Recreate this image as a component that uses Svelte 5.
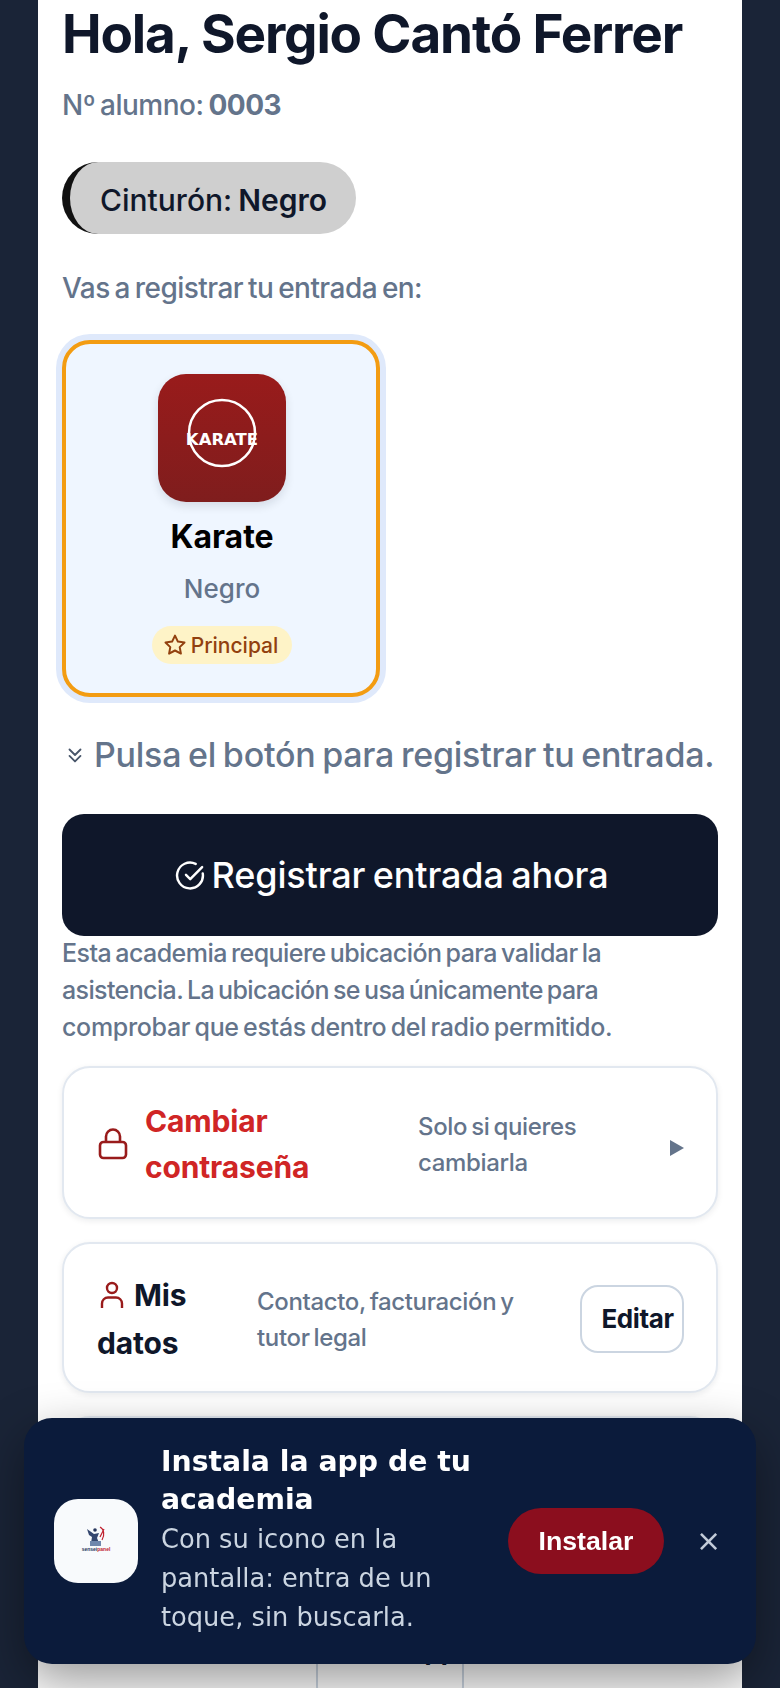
<script>
  const notes = [
    'Esta academia requiere ubicación para validar la',
    'asistencia. La ubicación se usa únicamente para',
    'comprobar que estás dentro del radio permitido.'
  ];
</script>

<div class="screen">
  <main class="sheet">
    <h1>Hola, Sergio Cantó Ferrer</h1>
    <p class="num">Nº alumno: <b>0003</b></p>
    <div class="belt"><span>Cinturón: <b>Negro</b></span></div>
    <p class="lead">Vas a registrar tu entrada en:</p>

    <div class="tile">
      <div class="logo">
        <svg viewBox="0 0 128 128" width="128" height="128" aria-hidden="true">
          <circle cx="64" cy="59" r="33" fill="none" stroke="#fff" stroke-width="2.5" />
          <text x="64" y="71" text-anchor="middle" class="logotext">KARATE</text>
        </svg>
      </div>
      <div class="sport">Karate</div>
      <div class="rank">Negro</div>
      <div class="badge">
        <svg viewBox="0 0 24 24" width="24" height="24" fill="none" stroke="#92400e" stroke-width="2" stroke-linejoin="round" aria-hidden="true">
          <path d="M12 2.600l2.900 6 6.600.9-4.800 4.600 1.200 6.500L12 17.500l-5.900 3.100 1.200-6.500L2.500 9.500l6.600-.9z" />
        </svg>
        <span>Principal</span>
      </div>
    </div>

    <div class="hint">
      <svg viewBox="0 0 24 24" width="22" height="22" fill="none" stroke="#475569" stroke-width="2" stroke-linecap="round" stroke-linejoin="round" aria-hidden="true">
        <path d="M6 6l6 6 6-6M6 13l6 6 6-6" />
      </svg>
      <span>Pulsa el botón para registrar tu entrada.</span>
    </div>

    <button class="cta">
      <svg viewBox="0 0 24 24" width="31" height="31" fill="none" stroke="#fff" stroke-width="1.900" stroke-linecap="round" stroke-linejoin="round" aria-hidden="true">
        <path d="M21.500 10.500A10 10 0 1 1 16 3" />
        <path d="M8.500 11.500l3.300 3.300L21 5.500" />
      </svg>
      <span>Registrar entrada ahora</span>
    </button>

    <p class="note">
      {#each notes as line}<span>{line}</span>{/each}
    </p>

    <section class="row pw">
      <svg class="lock" viewBox="0 0 30 34" width="30" height="34" fill="none" stroke="#991b1b" stroke-width="2.600" aria-hidden="true">
        <rect x="2" y="15" width="26" height="16" rx="3.500" />
        <path d="M8 15V9.500a7 7 0 0 1 14 0V15" />
      </svg>
      <div class="rtitle red">Cambiar<br />contraseña</div>
      <div class="rdesc">Solo si quieres<br />cambiarla</div>
      <span class="tri"></span>
    </section>

    <section class="row data">
      <div class="rtitle dark">
        <svg class="user" viewBox="0 0 24 28" width="24" height="28" fill="none" stroke="#991b1b" stroke-width="2.400" aria-hidden="true">
          <circle cx="12" cy="7" r="5" />
          <path d="M2 27v-4.500a6 6 0 0 1 6-6h8a6 6 0 0 1 6 6V27" />
        </svg>Mis<br />datos
      </div>
      <div class="rdesc">Contacto, facturación y<br />tutor legal</div>
      <button class="edit">Editar</button>
    </section>

    <section class="row third"></section>

    <button class="last">WhatsApp</button>
  </main>

  <aside class="install">
    <div class="appicon">
      <svg viewBox="0 0 30 30" width="30" height="30" aria-hidden="true">
        <circle cx="14" cy="4" r="1.800" fill="#26365c" />
        <path d="M6 3l7 5 5-1-2 5 2 5H10l1-6-3-2z" fill="#34476f" />
        <path d="M19 1c4 2 5 8 2 13M23 3l-4 8" fill="none" stroke="#c0212f" stroke-width="1.200" />
        <path d="M9 15h11v5H9z" fill="#6f87ad" />
        <text x="15" y="25" text-anchor="middle" class="tiny">sensei<tspan fill="#c0212f">panel</tspan></text>
      </svg>
    </div>
    <div class="itext">
      <div class="ititle">Instala la app de tu academia</div>
      <div class="isub">Con su icono en la pantalla: entra de un toque, sin buscarla.</div>
    </div>
    <button class="ibtn">Instalar</button>
    <button class="iclose" aria-label="Cerrar">×</button>
  </aside>
</div>

<style>
  :global(body) {
    margin: 0;
    background: #1a2437;
  }
  .screen {
    width: 780px;
    height: 1688px;
    overflow: hidden;
    background: #1a2437;
    font-family: "Inter", "Liberation Sans", sans-serif;
    color: #0f172a;
  }
  .sheet {
    width: 704px;
    margin: 0 auto;
    box-sizing: border-box;
    background: #fff;
    padding: 0 24px;
    min-height: 1800px;
    display: flex;
    flex-direction: column;
    align-items: flex-start;
  }
  h1 {
    margin: 3px 0 0;
    font-size: 53px;
    line-height: 62px;
    font-weight: 700;
    letter-spacing: -1.15px;
    white-space: nowrap;
  }
  .num {
    margin: 22px 0 0;
    font-size: 28px;
    line-height: 36px;
    color: #64748b;
    font-weight: 500;
    word-spacing: -2px;
    letter-spacing: -0.5px;
  }
  .num b { font-weight: 700; }
  .belt {
    margin-top: 39px;
    height: 72px;
    box-sizing: border-box;
    padding: 3px 29px 0 30px;
    display: flex;
    align-items: center;
    background: #cfcfcf;
    border-left: 8px solid #111;
    border-radius: 36px;
    font-size: 30px;
    font-weight: 500;
    word-spacing: -2px;
    white-space: nowrap;
  }
  .belt b { font-weight: 600; }
  .lead {
    margin: 36px 0 0;
    font-size: 28px;
    line-height: 36px;
    color: #64748b;
    font-weight: 500;
    word-spacing: -2px;
    letter-spacing: -0.55px;
  }
  .tile {
    margin-top: 34px;
    width: 318px;
    height: 357px;
    box-sizing: border-box;
    border: 4px solid #f39c12;
    border-radius: 28px;
    background: #eff6ff;
    box-shadow: 0 0 0 6px #dfe9fb;
    display: flex;
    flex-direction: column;
    align-items: center;
    padding: 30px 0 0 2px;
  }
  .logo {
    width: 128px;
    height: 128px;
    border-radius: 28px;
    background: linear-gradient(180deg, #991b1b, #7f1d1d);
    box-shadow: 0 4px 10px rgba(15, 23, 42, 0.12);
  }
  .logo svg { display: block; }
  .logotext {
    font-family: "DejaVu Sans", sans-serif;
    font-size: 16.500px;
    font-weight: 700;
    fill: #fff;
  }
  .sport {
    margin-top: 15px;
    font-size: 32px;
    line-height: 40px;
    font-weight: 700;
    color: #000;
  }
  .rank {
    margin-top: 16px;
    font-size: 26px;
    line-height: 32px;
    font-weight: 500;
    color: #64748b;
  }
  .badge {
    margin-top: 21px;
    height: 38px;
    padding: 0 14px 0 11px;
    display: flex;
    align-items: center;
    gap: 4px;
    border-radius: 19px;
    background: #fef3c7;
    font-size: 21px;
    font-weight: 500;
    color: #92400e;
  }
  .hint {
    margin-top: 36px;
    display: flex;
    align-items: center;
    gap: 8px;
    padding-left: 2px;
    font-size: 34px;
    line-height: 44px;
    font-weight: 500;
    color: #64748b;
    white-space: nowrap;
    word-spacing: -2px;
    letter-spacing: -0.25px;
  }
  .cta {
    margin-top: 37px;
    width: 656px;
    height: 122px;
    border: 0;
    border-radius: 22px;
    background: #0f172a;
    color: #fff;
    display: flex;
    align-items: center;
    justify-content: center;
    gap: 6px;
    font: inherit;
    font-size: 36px;
    font-weight: 500;
    word-spacing: -2px;
    letter-spacing: -0.15px;
  }
  .cta svg { margin-left: 3px; }
  .note {
    margin: -1px 0 0;
    font-size: 25px;
    line-height: 37px;
    font-weight: 500;
    color: #64748b;
    word-spacing: -2px;
    letter-spacing: -0.55px;
  }
  .note span { display: block; white-space: nowrap; }
  .note span:nth-child(2) { letter-spacing: -0.62px; }
  .note span:last-child { letter-spacing: -0.32px; }
  .row {
    width: 656px;
    box-sizing: border-box;
    border: 2px solid #e2e8f0;
    border-radius: 28px;
    background: #fff;
    box-shadow: 0 2px 6px rgba(15, 23, 42, 0.08);
    display: flex;
    align-items: center;
  }
  .pw {
    margin-top: 20px;
    height: 153px;
    padding: 2px 32px 0 34px;
  }
  .data {
    margin-top: 23px;
    height: 151px;
    padding: 2px 32px 0 33px;
  }
  .third {
    margin-top: 23px;
    height: 150px;
  }
  .lock { flex: none; margin-right: 17px; }
  .rtitle {
    font-size: 30px;
    line-height: 46px;
    font-weight: 700;
    white-space: nowrap;
    letter-spacing: -0.15px;
  }
  .red { color: #d02525; width: 273px; }
  .dark { color: #0f172a; width: 160px; line-height: 48px; }
  .user { vertical-align: -3px; margin: 0 10px 0 3px; }
  .rdesc {
    padding-top: 2px;
    font-size: 24px;
    line-height: 36px;
    font-weight: 500;
    color: #64748b;
    white-space: nowrap;
    word-spacing: -2px;
    letter-spacing: -0.35px;
  }
  .tri {
    margin: 8px 0 0 auto;
    width: 0;
    height: 0;
    border-left: 14px solid #64748b;
    border-top: 8px solid transparent;
    border-bottom: 8px solid transparent;
  }
  .edit {
    margin-left: auto;
    width: 104px;
    height: 68px;
    box-sizing: border-box;
    border: 2px solid #cbd5e1;
    border-radius: 18px;
    background: #fff;
    color: #0f172a;
    font: inherit;
    font-size: 26px;
    font-weight: 700;
    letter-spacing: -0.4px;
    padding: 0 0 0 11px;
  }
  .last {
    margin: 30px auto 0;
    width: 148px;
    height: 108px;
    border: 2px solid #cbd5e1;
    border-radius: 18px;
    background: #fff;
    font: inherit;
    font-size: 26px;
    font-weight: 700;
    padding: 0;
    color: #0f172a;
  }
  .install {
    position: fixed;
    left: 24px;
    top: 1418px;
    width: 732px;
    height: 246px;
    box-sizing: border-box;
    padding: 0 30px;
    border-radius: 28px;
    background: #0b1b3b;
    box-shadow: 0 18px 50px rgba(0, 0, 0, 0.4);
    display: flex;
    align-items: center;
    font-family: "DejaVu Sans", sans-serif;
  }
  .appicon {
    flex: none;
    width: 84px;
    height: 84px;
    border-radius: 24px;
    background: #f8fafc;
    display: flex;
    align-items: center;
    justify-content: center;
  }
  .tiny {
    font-family: "Liberation Sans", sans-serif;
    font-size: 5px;
    font-weight: 700;
    fill: #26365c;
  }
  .itext {
    flex: none;
    width: 320px;
    margin-left: 23px;
    padding-bottom: 3px;
  }
  .ititle {
    font-size: 28.300px;
    line-height: 38px;
    font-weight: 700;
    color: #fff;
    margin-bottom: 1px;
  }
  .isub {
    font-size: 25.700px;
    line-height: 39px;
    color: #cbd5e1;
  }
  .ibtn {
    margin-left: 27px;
    flex: none;
    width: 156px;
    height: 66px;
    border: 0;
    border-radius: 33px;
    background: #8b0e1e;
    color: #fff;
    font-family: "Liberation Sans", sans-serif;
    font-size: 26.700px;
    font-weight: 700;
    padding: 0;
  }
  .iclose {
    margin-left: 32px;
    border: 0;
    padding: 0;
    background: transparent;
    color: #c3ccd9;
    font-family: "DejaVu Sans", sans-serif;
    font-size: 30px;
    line-height: 32px;
  }
</style>
